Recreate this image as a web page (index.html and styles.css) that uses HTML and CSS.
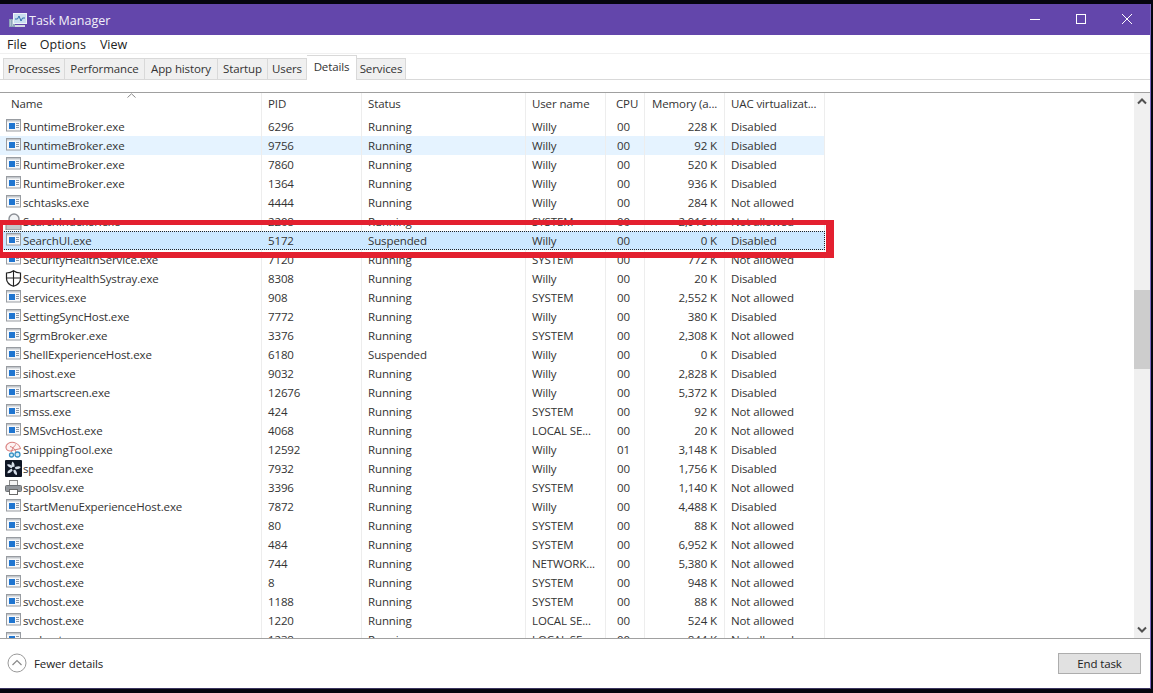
FILE: index.html
```html
<!DOCTYPE html>
<html lang="en">
<head>
<meta charset="utf-8">
<title>Task Manager</title>
<link rel="stylesheet" href="styles.css">
</head>
<body>
<svg class="defs" width="0" height="0" aria-hidden="true">
  <symbol id="exe" viewBox="0 0 17 17">
    <rect x="1.500" y="1.500" width="14" height="11.500" fill="#f7f8fa" stroke="#989ca1"/>
    <rect x="2" y="2" width="13" height="1.500" fill="#c3c7cc"/>
    <rect x="4" y="5" width="6" height="6" fill="#1f75d0"/>
    <path d="M11 5.500h3M11 7.500h3M11 9.500h3" stroke="#8f99a6" fill="none"/>
  </symbol>
  <symbol id="indexer" viewBox="0 0 17 17">
    <circle cx="9" cy="6" r="5" fill="#f2f4f6" stroke="#8c9096" stroke-width="1.400"/>
    <rect x="1" y="10" width="15" height="7" fill="#c4c6c9" stroke="#85888c"/>
  </symbol>
  <symbol id="shield" viewBox="0 0 17 17">
    <path d="M8.500 0.800C6.500 2.500 4 3 1.500 3v5.500c0 3.800 3.200 6.500 7 7.800 3.800-1.300 7-4 7-7.800V3C13 3 10.500 2.500 8.500 0.800Z" fill="#fff" stroke="#222" stroke-width="1.200"/>
    <path d="M8.500 1v15M1.500 8h14" stroke="#222" stroke-width="1.100" fill="none"/>
  </symbol>
  <symbol id="snip" viewBox="0 0 17 17">
    <path d="M1 7C.5 3 5 .5 9 1.500c3 .8 6 3.500 6.500 6-3 1-6.500 1-9 2.200C4 10.500 1.500 9.500 1 7Z" fill="#fdf3f3" stroke="#d9807f" stroke-width="1.100"/>
    <path d="M5 5.500c2.500.5 5 2.500 6 5.500M11 3.500C8.500 5.500 7 8 6.500 11" stroke="#d9807f" fill="none"/>
    <circle cx="12.500" cy="13.500" r="2.500" fill="#d6ecf6" stroke="#3a93c6" stroke-width="1.300"/>
    <circle cx="6.500" cy="14" r="2" fill="#d6ecf6" stroke="#3a93c6" stroke-width="1.300"/>
  </symbol>
  <symbol id="fan" viewBox="0 0 17 17">
    <rect width="17" height="17" rx="1" fill="#0f1624"/>
    <path d="M8.500 8.500C6 6.500 6 3.500 7.500 1.500 9.500 3 10.500 6 8.500 8.500ZM8.500 8.500C11 6 14 5.800 15.800 7 14.500 9.200 11.500 10 8.500 8.500ZM8.500 8.500C11 10 12.500 12.500 12 15 9.500 15 7.800 12 8.500 8.500ZM8.500 8.500C7.500 11.500 5 13.500 2.500 13.300 2.200 11 5 8.800 8.500 8.500ZM8.500 8.500C5.500 8.500 3 6.800 2 4.800 4.200 3.500 7 5 8.500 8.500Z" fill="#d5dde8"/>
    <circle cx="8.500" cy="8.500" r="1.800" fill="#0f1624"/>
  </symbol>
  <symbol id="printer" viewBox="0 0 17 17">
    <rect x="4.500" y="1.500" width="8" height="6" fill="#f5f5f5" stroke="#8a8a8a"/>
    <rect x="0.500" y="6.500" width="16" height="6" rx="1" fill="#93979c" stroke="#6e7276"/>
    <rect x="4.500" y="10.500" width="8" height="5" fill="#fff" stroke="#6a6a6a"/>
  </symbol>
</svg>

<div class="window">
  <header class="titlebar">
    <svg class="app-icon" width="18" height="16" viewBox="0 0 18 16" aria-hidden="true">
      <path d="M0 7h6v8H0z" fill="#8fa6bb"/>
      <path d="M1 9h1M1 11h1M3 9h1M3 11h1M1 13h1M3 13h1" stroke="#d8e2ea"/>
      <rect x="4.500" y="1.500" width="13" height="10" fill="#c9dff0" stroke="#eef3f8"/>
      <path d="M6 7h2.500l1.500-3 2 5 1.500-3H16" stroke="#2f6fae" fill="none"/>
      <path d="M6 14h10" stroke="#d4dbe3" stroke-width="2"/>
    </svg>
    <span class="title">Task Manager</span>
    <div class="controls">
      <svg class="ctl" width="46" height="31" viewBox="0 0 46 31" aria-hidden="true"><path d="M18 15.500h10" stroke="#fff" stroke-width="1"/></svg>
      <svg class="ctl" width="46" height="31" viewBox="0 0 46 31" aria-hidden="true"><rect x="18.500" y="10.500" width="9" height="9" fill="none" stroke="#fff"/></svg>
      <svg class="ctl" width="46" height="31" viewBox="0 0 46 31" aria-hidden="true"><path d="M18 10l10 10M28 10 18 20" stroke="#fff" fill="none"/></svg>
    </div>
  </header>

  <nav class="menubar">
    <span class="menu m1">File</span><span class="menu m2">Options</span><span class="menu">View</span>
  </nav>

  <div class="tabs">
    <span class="tab t1">Processes</span><span class="tab t2">Performance</span><span class="tab t3">App history</span><span class="tab t4">Startup</span><span class="tab t5">Users</span><span class="tab t6 active">Details</span><span class="tab t7">Services</span>
  </div>

  <div class="tabgap"></div>

  <main class="listarea">
    <div class="list">
      <div class="row head">
        <div class="c name hname">Name<svg class="sort" width="9" height="5" viewBox="0 0 9 5" aria-hidden="true"><path d="M.5 4.500 4.500.8l4 3.700" fill="none" stroke="#8a8a8a"/></svg></div><div class="c pid">PID</div><div class="c">Status</div><div class="c">User name</div><div class="c cpu hcpu">CPU</div><div class="c hmem">Memory (a...</div><div class="c uac">UAC virtualizat...</div>
      </div>
      <div class="row"><div class="c name"><svg class="ico"><use href="#exe"/></svg>RuntimeBroker.exe</div><div class="c pid">6296</div><div class="c">Running</div><div class="c">Willy</div><div class="c cpu">00</div><div class="c mem">228 K</div><div class="c uac">Disabled</div></div>
      <div class="row hover"><div class="c name"><svg class="ico"><use href="#exe"/></svg>RuntimeBroker.exe</div><div class="c pid">9756</div><div class="c">Running</div><div class="c">Willy</div><div class="c cpu">00</div><div class="c mem">92 K</div><div class="c uac">Disabled</div></div>
      <div class="row"><div class="c name"><svg class="ico"><use href="#exe"/></svg>RuntimeBroker.exe</div><div class="c pid">7860</div><div class="c">Running</div><div class="c">Willy</div><div class="c cpu">00</div><div class="c mem">520 K</div><div class="c uac">Disabled</div></div>
      <div class="row"><div class="c name"><svg class="ico"><use href="#exe"/></svg>RuntimeBroker.exe</div><div class="c pid">1364</div><div class="c">Running</div><div class="c">Willy</div><div class="c cpu">00</div><div class="c mem">936 K</div><div class="c uac">Disabled</div></div>
      <div class="row"><div class="c name"><svg class="ico"><use href="#exe"/></svg>schtasks.exe</div><div class="c pid">4444</div><div class="c">Running</div><div class="c">Willy</div><div class="c cpu">00</div><div class="c mem">284 K</div><div class="c uac">Not allowed</div></div>
      <div class="row"><div class="c name"><svg class="ico"><use href="#indexer"/></svg>SearchIndexer.exe</div><div class="c pid">2208</div><div class="c">Running</div><div class="c">SYSTEM</div><div class="c cpu">00</div><div class="c mem">2,916 K</div><div class="c uac">Not allowed</div></div>
      <div class="row selected"><div class="c name"><svg class="ico"><use href="#exe"/></svg>SearchUI.exe</div><div class="c pid">5172</div><div class="c">Suspended</div><div class="c">Willy</div><div class="c cpu">00</div><div class="c mem">0 K</div><div class="c uac">Disabled</div></div>
      <div class="row"><div class="c name"><svg class="ico"><use href="#exe"/></svg>SecurityHealthService.exe</div><div class="c pid">7120</div><div class="c">Running</div><div class="c">SYSTEM</div><div class="c cpu">00</div><div class="c mem">772 K</div><div class="c uac">Not allowed</div></div>
      <div class="row"><div class="c name"><svg class="ico"><use href="#shield"/></svg>SecurityHealthSystray.exe</div><div class="c pid">8308</div><div class="c">Running</div><div class="c">Willy</div><div class="c cpu">00</div><div class="c mem">20 K</div><div class="c uac">Disabled</div></div>
      <div class="row"><div class="c name"><svg class="ico"><use href="#exe"/></svg>services.exe</div><div class="c pid">908</div><div class="c">Running</div><div class="c">SYSTEM</div><div class="c cpu">00</div><div class="c mem">2,552 K</div><div class="c uac">Not allowed</div></div>
      <div class="row"><div class="c name"><svg class="ico"><use href="#exe"/></svg>SettingSyncHost.exe</div><div class="c pid">7772</div><div class="c">Running</div><div class="c">Willy</div><div class="c cpu">00</div><div class="c mem">380 K</div><div class="c uac">Disabled</div></div>
      <div class="row"><div class="c name"><svg class="ico"><use href="#exe"/></svg>SgrmBroker.exe</div><div class="c pid">3376</div><div class="c">Running</div><div class="c">SYSTEM</div><div class="c cpu">00</div><div class="c mem">2,308 K</div><div class="c uac">Not allowed</div></div>
      <div class="row"><div class="c name"><svg class="ico"><use href="#exe"/></svg>ShellExperienceHost.exe</div><div class="c pid">6180</div><div class="c">Suspended</div><div class="c">Willy</div><div class="c cpu">00</div><div class="c mem">0 K</div><div class="c uac">Disabled</div></div>
      <div class="row"><div class="c name"><svg class="ico"><use href="#exe"/></svg>sihost.exe</div><div class="c pid">9032</div><div class="c">Running</div><div class="c">Willy</div><div class="c cpu">00</div><div class="c mem">2,828 K</div><div class="c uac">Disabled</div></div>
      <div class="row"><div class="c name"><svg class="ico"><use href="#exe"/></svg>smartscreen.exe</div><div class="c pid">12676</div><div class="c">Running</div><div class="c">Willy</div><div class="c cpu">00</div><div class="c mem">5,372 K</div><div class="c uac">Disabled</div></div>
      <div class="row"><div class="c name"><svg class="ico"><use href="#exe"/></svg>smss.exe</div><div class="c pid">424</div><div class="c">Running</div><div class="c">SYSTEM</div><div class="c cpu">00</div><div class="c mem">92 K</div><div class="c uac">Not allowed</div></div>
      <div class="row"><div class="c name"><svg class="ico"><use href="#exe"/></svg>SMSvcHost.exe</div><div class="c pid">4068</div><div class="c">Running</div><div class="c">LOCAL SE...</div><div class="c cpu">00</div><div class="c mem">20 K</div><div class="c uac">Not allowed</div></div>
      <div class="row"><div class="c name"><svg class="ico"><use href="#snip"/></svg>SnippingTool.exe</div><div class="c pid">12592</div><div class="c">Running</div><div class="c">Willy</div><div class="c cpu">01</div><div class="c mem">3,148 K</div><div class="c uac">Disabled</div></div>
      <div class="row"><div class="c name"><svg class="ico"><use href="#fan"/></svg>speedfan.exe</div><div class="c pid">7932</div><div class="c">Running</div><div class="c">Willy</div><div class="c cpu">00</div><div class="c mem">1,756 K</div><div class="c uac">Disabled</div></div>
      <div class="row"><div class="c name"><svg class="ico"><use href="#printer"/></svg>spoolsv.exe</div><div class="c pid">3396</div><div class="c">Running</div><div class="c">SYSTEM</div><div class="c cpu">00</div><div class="c mem">1,140 K</div><div class="c uac">Not allowed</div></div>
      <div class="row"><div class="c name"><svg class="ico"><use href="#exe"/></svg>StartMenuExperienceHost.exe</div><div class="c pid">7872</div><div class="c">Running</div><div class="c">Willy</div><div class="c cpu">00</div><div class="c mem">4,488 K</div><div class="c uac">Disabled</div></div>
      <div class="row"><div class="c name"><svg class="ico"><use href="#exe"/></svg>svchost.exe</div><div class="c pid">80</div><div class="c">Running</div><div class="c">SYSTEM</div><div class="c cpu">00</div><div class="c mem">88 K</div><div class="c uac">Not allowed</div></div>
      <div class="row"><div class="c name"><svg class="ico"><use href="#exe"/></svg>svchost.exe</div><div class="c pid">484</div><div class="c">Running</div><div class="c">SYSTEM</div><div class="c cpu">00</div><div class="c mem">6,952 K</div><div class="c uac">Not allowed</div></div>
      <div class="row"><div class="c name"><svg class="ico"><use href="#exe"/></svg>svchost.exe</div><div class="c pid">744</div><div class="c">Running</div><div class="c">NETWORK...</div><div class="c cpu">00</div><div class="c mem">5,380 K</div><div class="c uac">Not allowed</div></div>
      <div class="row"><div class="c name"><svg class="ico"><use href="#exe"/></svg>svchost.exe</div><div class="c pid">8</div><div class="c">Running</div><div class="c">SYSTEM</div><div class="c cpu">00</div><div class="c mem">948 K</div><div class="c uac">Not allowed</div></div>
      <div class="row"><div class="c name"><svg class="ico"><use href="#exe"/></svg>svchost.exe</div><div class="c pid">1188</div><div class="c">Running</div><div class="c">SYSTEM</div><div class="c cpu">00</div><div class="c mem">88 K</div><div class="c uac">Not allowed</div></div>
      <div class="row"><div class="c name"><svg class="ico"><use href="#exe"/></svg>svchost.exe</div><div class="c pid">1220</div><div class="c">Running</div><div class="c">LOCAL SE...</div><div class="c cpu">00</div><div class="c mem">524 K</div><div class="c uac">Not allowed</div></div>
      <div class="row"><div class="c name"><svg class="ico"><use href="#exe"/></svg>svchost.exe</div><div class="c pid">1238</div><div class="c">Running</div><div class="c">LOCAL SE...</div><div class="c cpu">00</div><div class="c mem">844 K</div><div class="c uac">Not allowed</div></div>
    </div>
    <div class="scrollbar">
      <svg class="arrow" width="16" height="17" viewBox="0 0 16 17" aria-hidden="true"><path d="M4 10.500 8 6.500l4 4" fill="none" stroke="#505050" stroke-width="2"/></svg>
      <div class="track"><div class="thumb"></div></div>
      <svg class="arrow" width="16" height="17" viewBox="0 0 16 17" aria-hidden="true"><path d="M4 6.500 8 10.500l4-4" fill="none" stroke="#505050" stroke-width="2"/></svg>
    </div>
    <div class="redbox"></div>
  </main>

  <footer class="footer">
    <svg class="fewer" width="20" height="20" viewBox="0 0 20 20" aria-hidden="true"><circle cx="10" cy="10" r="9" fill="#fff" stroke="#9a9a9a"/><path d="M5.500 12 10 7.500l4.500 4.500" fill="none" stroke="#8a8a8a" stroke-width="1.200"/></svg>
    <span class="fewer-label">Fewer details</span>
    <button class="endtask" type="button">End task</button>
  </footer>
</div>
</body>
</html>
```
FILE: styles.css
```css
* { box-sizing: border-box; }
html, body { margin: 0; height: 100%; }
body {
  background: #05050f;
  overflow: hidden;
  padding-top: 4px;
  font-family: "Open Sans", "Noto Sans", sans-serif;
  font-size: 11.500px;
  letter-spacing: -0.120px;
  color: #333;
}
.defs { position: absolute; }

.window {
  width: 1151px;
  height: 685px;
  background: #fff;
  border-right: 1px solid #7a66bd;
  border-bottom: 1px solid #3b3560;
  display: flex;
  flex-direction: column;
}

.titlebar {
  height: 31px;
  flex: none;
  background: #6346ab;
  color: #f2eff9;
  display: flex;
  align-items: center;
  padding-left: 9px;
  font-size: 12.500px;
  letter-spacing: 0;
}
.title { padding-top: 1px; }
.app-icon { margin-right: 2px; }
.controls { margin-left: auto; display: flex; }
.ctl { display: block; }

.menubar {
  height: 19px;
  flex: none;
  display: flex;
  align-items: center;
  padding-left: 7px;
  color: #222;
  font-size: 12.500px;
  letter-spacing: 0;
  border-bottom: 1px solid #f0f0f0;
}
.m1 { margin-right: 13px; }
.m2 { margin-right: 14px; }

.tabs {
  height: 26px;
  flex: none;
  display: flex;
  align-items: flex-end;
  padding-left: 3px;
  border-bottom: 1px solid #d9d9d9;
}
.tab {
  height: 21px;
  background: #f0f0f0;
  border: 1px solid #d9d9d9;
  border-bottom: none;
  border-left: none;
  display: flex;
  align-items: center;
  justify-content: center;
  color: #333;
  padding-bottom: 1px;
}
.t1 { width: 62px; border-left: 1px solid #d9d9d9; }
.t2 { width: 80px; }
.t3 { width: 73px; }
.t4 { width: 50px; }
.t5 { width: 39px; }
.t6 { width: 50px; }
.t7 { width: 49px; }
.tab.active {
  height: 25px;
  background: #fff;
  margin-bottom: -1px;
  padding-bottom: 3px;
}

.tabgap { height: 12px; flex: none; }

.listarea {
  position: relative;
  height: 547px;
  flex: none;
  border-top: 1px solid #a0a0a0;
  border-bottom: 1px solid #a0a0a0;
  display: flex;
  overflow: hidden;
}

.list { width: 1134px; flex: none; overflow: hidden; }

.row {
  display: grid;
  grid-template-columns: 262px 100px 164px 80px 39px 80px 100px;
  width: 825px;
  height: 19px;
  line-height: 19px;
  white-space: nowrap;
}
.row.head { height: 24px; line-height: 22px; }
.c {
  border-right: 1px solid #ededed;
  padding-left: 6px;
  overflow: hidden;
}
.name {
  display: flex;
  align-items: center;
  padding-left: 5px;
}
.hname { padding-left: 11px; position: relative; align-items: flex-start; }
.sort { position: absolute; left: 127px; top: 0; }
.ico {
  width: 17px;
  height: 17px;
  margin-right: 1px;
  flex: none;
}
.cpu { padding-left: 11px; }
.hcpu { padding-left: 10px; }
.hmem { padding-left: 7px; }
.mem { text-align: right; padding: 0 7px 0 0; }
.row.hover { background: #e5f3ff; }
.row.selected { background: #cce8ff; outline: 1px dotted #222; outline-offset: -1px; }
.row.selected .c { border-right-color: transparent; }

.scrollbar {
  width: 16px;
  flex: none;
  background: #f0f0f0;
  display: flex;
  flex-direction: column;
}
.arrow { display: block; flex: none; }
.track { flex: 1; padding-top: 180px; }
.thumb { height: 79px; background: #cdcdcd; }

.redbox {
  position: absolute;
  left: 0;
  top: 127px;
  width: 834px;
  height: 38px;
  border: solid #e3202f;
  border-width: 5px 8px 6px 3px;
}

.footer {
  flex: 1;
  display: flex;
  align-items: center;
  padding: 0 9px 1px 7px;
  color: #222;
}
.fewer { margin-right: 7px; }
.endtask {
  margin-left: auto;
  width: 83px;
  height: 21px;
  background: #e1e1e1;
  border: 1px solid #adadad;
  font: inherit;
  letter-spacing: inherit;
  color: #222;
  padding: 0;
}
```
